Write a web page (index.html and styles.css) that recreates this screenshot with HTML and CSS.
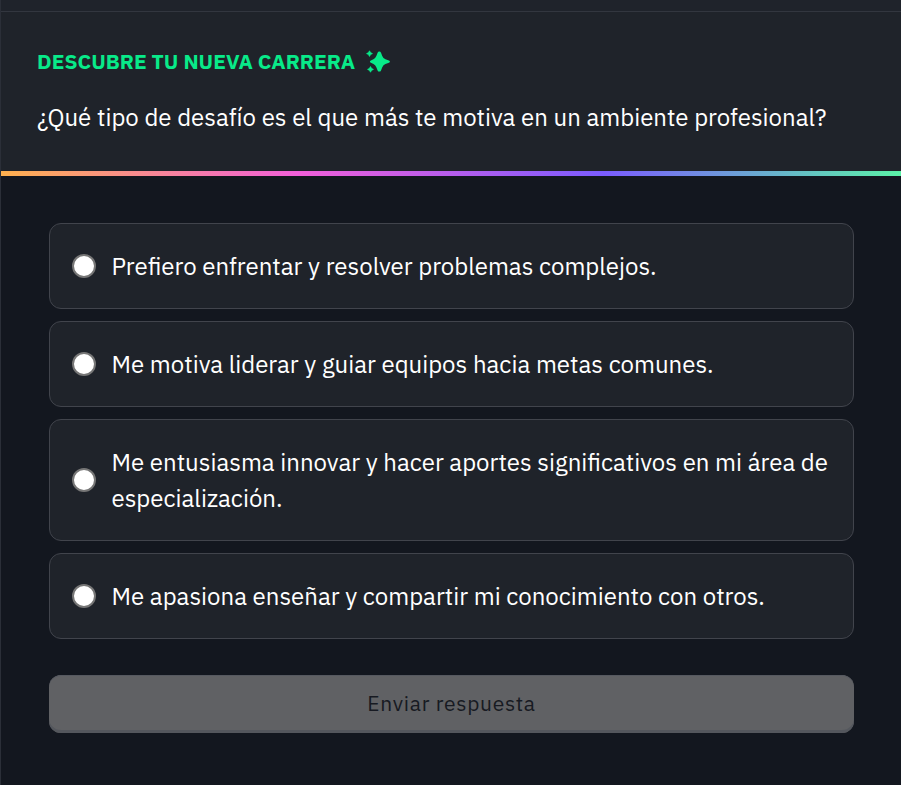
FILE: index.html
```html
<!DOCTYPE html>
<html lang="es">
<head>
<meta charset="utf-8">
<title>Descubre tu nueva carrera</title>
<link rel="stylesheet" href="styles.css">
</head>
<body>
<main class="quiz">
  <div class="topbar"></div>
  <header class="header">
    <h1 class="title"><span class="title-text">DESCUBRE TU NUEVA CARRERA</span>
      <svg class="sparkles" viewBox="0 0 24 24" aria-hidden="true"><path d="M13.3 1.6 Q14.5 1.6 15 2.8 Q16.3 6.8 17.5 8 Q18.7 9.3 22.9 10.4 Q23.9 10.8 23.9 11.5 Q23.9 12.3 22.9 12.7 Q18.7 14 17.5 15.2 Q16.3 16.4 15 20.4 Q14.5 21.6 13.3 21.6 Q12.1 21.6 11.6 20.4 Q10.3 16.4 9.1 15.2 Q7.9 14 4.9 12.7 Q3.9 12.3 3.9 11.5 Q3.9 10.8 4.9 10.4 Q7.9 9.3 9.1 8 Q10.3 6.8 11.6 2.8 Q12.1 1.6 13.3 1.6Z"/><path d="M3.5 .8Q4 3.1 6.4 3.6Q4 4.1 3.5 6.4Q3 4.1.6 3.6Q3 3.1 3.5 .8ZM4.5 16.6Q5 18.9 7.4 19.4Q5 19.9 4.5 22.2Q4 19.9 1.6 19.4Q4 18.9 4.5 16.6Z" stroke="currentColor" stroke-width=".8" stroke-linejoin="round"/></svg>
    </h1>
    <p class="question">¿Qué tipo de desafío es el que más te motiva en un ambiente profesional?</p>
  </header>
  <div class="rainbow"></div>
  <form class="form">
    <label class="option"><input class="radio" type="radio" name="reto"><span class="label">Prefiero enfrentar y resolver problemas complejos.</span></label>
    <label class="option"><input class="radio" type="radio" name="reto"><span class="label">Me motiva liderar y guiar equipos hacia metas comunes.</span></label>
    <label class="option"><input class="radio" type="radio" name="reto"><span class="label">Me entusiasma innovar y hacer aportes significativos en mi área de especialización.</span></label>
    <label class="option"><input class="radio" type="radio" name="reto"><span class="label">Me apasiona enseñar y compartir mi conocimiento con otros.</span></label>
    <button class="submit" type="button" disabled>Enviar respuesta</button>
  </form>
</main>
</body>
</html>
```
FILE: styles.css
```css
* { box-sizing: border-box; }
body { margin: 0; background: #13171f; color: #fff; font-family: "IBM Plex Sans", Roboto, sans-serif; font-size: 24px; overflow: hidden; }
.quiz { height: 785px; border-left: 1px solid #2b2f38; }
.topbar { height: 12px; background: #1f232b; border-bottom: 1px solid #32363f; }
.header { height: 159px; padding: 31px 36px 0; background: #1f232a; }
.title { display: flex; align-items: center; height: 36px; margin: 0; color: #08ea89; font-size: 21px; line-height: 36px; font-weight: 700; }
.title-text { width: 329px; white-space: nowrap; }
.sparkles { width: 24px; height: 24px; margin-top: 2px; fill: currentColor; flex: none; }
.question { margin: 20px 0 0; line-height: 36px; white-space: nowrap; }
.rainbow { height: 5px; background: linear-gradient(90deg, #ffb14e 0%, #f25fda 33%, #7b5cff 67%, #5af2a7 100%); }
.form { display: flex; flex-direction: column; gap: 12px; padding: 47px 47px 0 48px; }
.option { display: flex; align-items: center; gap: 16px; padding: 24px 20px 24px 21.5px; border: 1px solid #41444c; border-radius: 12px; background: #1f232a; }
.radio { appearance: none; flex: none; width: 24px; height: 24px; margin: 0 0 1px; border: 2px solid #767676; border-radius: 50%; background: #fff; }
.label { line-height: 36px; }
.submit { height: 58px; margin-top: 24px; padding: 0 0 2px; border: 0; border-radius: 12px; background: #606164; box-shadow: inset 0 -3px #54575d, inset 0 1px #565960; color: #171a22; font: 21px "IBM Plex Sans", Roboto, sans-serif; letter-spacing: .7px; }
```
